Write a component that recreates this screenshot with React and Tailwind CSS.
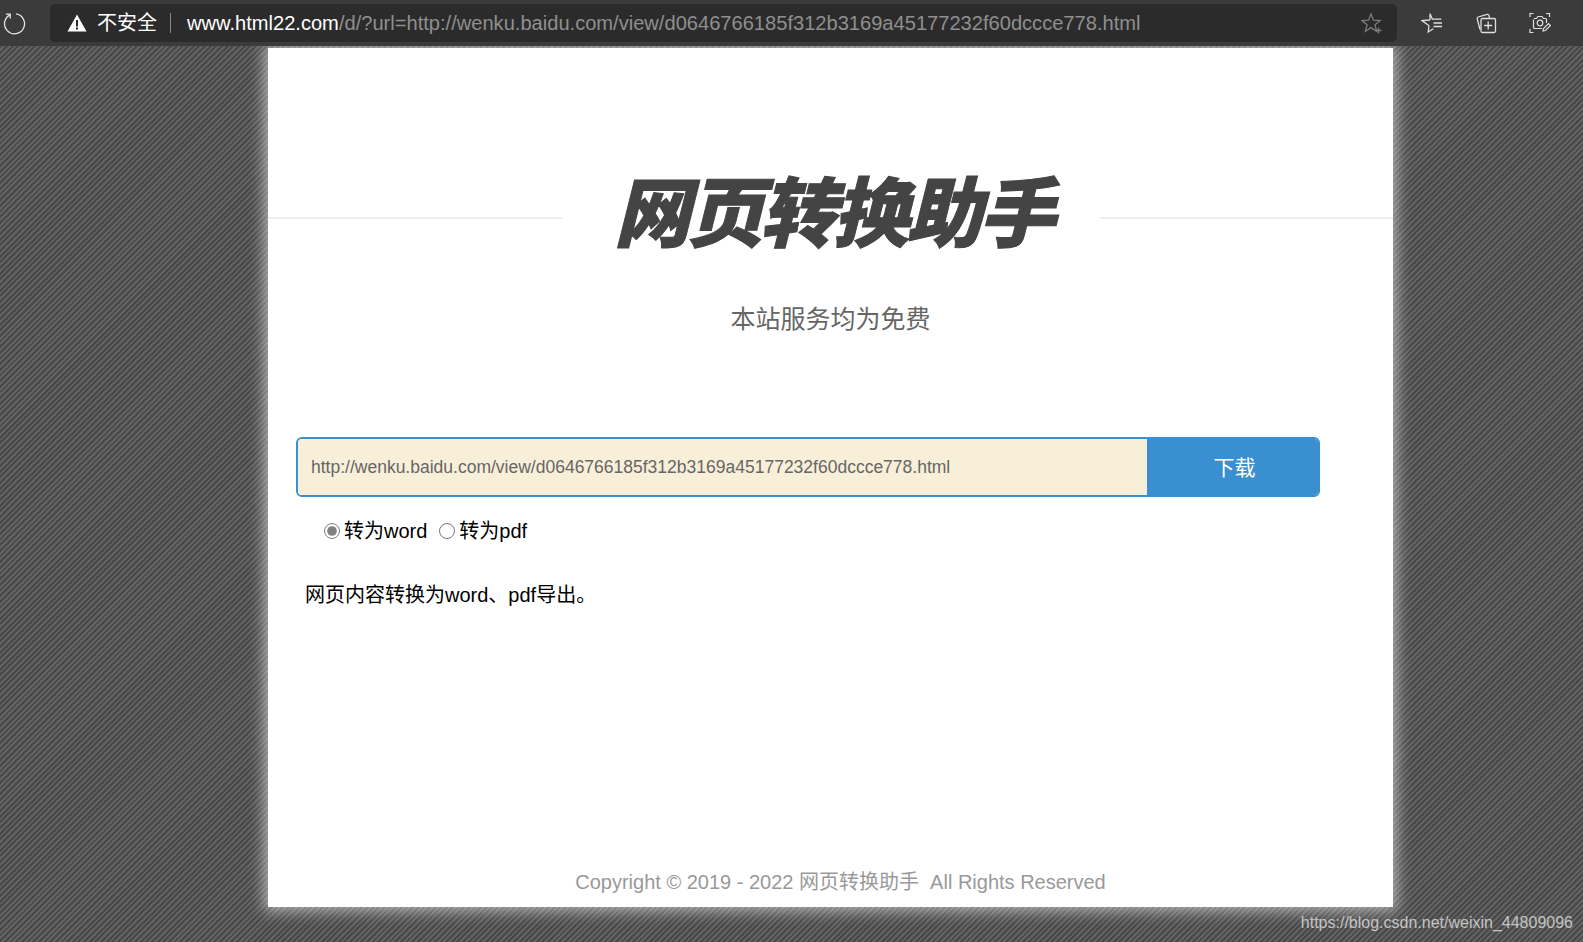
import { useState } from "react";

const cjk = "font-['Liberation_Sans','Noto_Sans_CJK_SC',sans-serif]";

function ReloadIcon() {
  return (
    <svg width="24" height="24" viewBox="0 0 24 24" fill="none" stroke="#e6e6e6" strokeWidth="1.3">
      <path d="M7.6 3.6A10 10 0 1 0 13 2.9" />
      <path d="M7.2 7.6V3.2H3" />
    </svg>
  );
}

function WarningIcon() {
  return (
    <svg width="20" height="18" viewBox="0 0 20 18">
      <path d="M10 0.5L19.5 17.5H0.5Z" fill="#fff" />
      <rect x="9" y="6" width="2" height="6.5" fill="#2b2b2b" />
      <rect x="9" y="13.5" width="2" height="2" fill="#2b2b2b" />
    </svg>
  );
}

function StarAddIcon() {
  return (
    <svg width="22" height="22" viewBox="0 0 22 22" fill="none" stroke="#7d7d7d" strokeWidth="1.3">
      <path d="M10 2l2.500 6.200 6.700.4-5.200 4.200 1.700 6.400L10 15.600l-5.600 3.600 1.700-6.400L.9 8.600l6.700-.4z" />
      <path d="M17.500 15.500v6M14.500 18.500h6" fill="none" />
    </svg>
  );
}

function FavoritesIcon() {
  return (
    <svg width="22" height="22" viewBox="0 0 22 22" fill="none" stroke="#e0e0e0" strokeWidth="1.3">
      <path d="M9 8V1.800l2.400 5.400h9M21 11h-8.500M21 14.500h-8.500M8 13.500l-.8 6.500 5-3.200M9 8l-8 .6 6.800 5" />
    </svg>
  );
}

function CollectionsIcon() {
  return (
    <svg width="22" height="22" viewBox="0 0 22 22" fill="none" stroke="#e0e0e0" strokeWidth="1.3">
      <path d="M5 17.500L2.200 6.800a1.500 1.500 0 0 1 1-1.800l8.800-2.600a1.500 1.500 0 0 1 1.900 1L14.500 6" />
      <rect x="6" y="6.500" width="14.500" height="14" rx="1.500" />
      <path d="M13.200 9.500v8M9.200 13.500h8" />
    </svg>
  );
}

function CaptureIcon() {
  return (
    <svg width="22" height="22" viewBox="0 0 22 22" fill="none" stroke="#e0e0e0" strokeWidth="1.200">
      <path d="M1 5V1.500h3.500M17 1.500h3.500V5M1 17v3.500h3.500" />
      <path d="M5 6.500h2.500L9 4.500h4l1.500 2h2a1 1 0 0 1 1 1v3.500M13 16.500H5.500a1 1 0 0 1-1-1V7.500" />
      <circle cx="11" cy="11" r="2.800" />
      <path d="M14 19l.5-2.500 5-5 2 2-5 5z" />
    </svg>
  );
}

export default function App() {
  const [format, setFormat] = useState("word");
  const [url, setUrl] = useState("http://wenku.baidu.com/view/d0646766185f312b3169a45177232f60dccce778.html");

  return (
    <div className={`relative flex h-[942px] flex-col overflow-hidden bg-[#555] ${cjk}`}>
      {/* Browser toolbar */}
      <div className="relative z-10 flex h-[46px] shrink-0 items-center bg-[#3b3b3b]">
        <div className="flex w-[50px] justify-center pr-[20px]">
          <ReloadIcon />
        </div>
        <div className="flex h-[38px] w-[1347px] items-center rounded-[5px] bg-[#2b2b2b] pl-[17px] pr-[14px]">
          <WarningIcon />
          <span className="ml-[10px] text-[20px] text-white">不安全</span>
          <span className="ml-[13px] mr-[16px] h-[20px] w-px bg-[#8a8a8a]" />
          <span className="flex-1 truncate text-[20.100px]">
            <span className="text-white">www.html22.com</span>
            <span className="text-[#8f8f8f]">/d/?url=http://wenku.baidu.com/view/d0646766185f312b3169a45177232f60dccce778.html</span>
          </span>
          <StarAddIcon />
        </div>
        <div className="flex items-center gap-[32px] pl-[24px]">
          <FavoritesIcon />
          <CollectionsIcon />
          <CaptureIcon />
        </div>
      </div>

      {/* Striped page background */}
      <div className="flex flex-1 bg-[repeating-linear-gradient(135deg,#484848_0px,#484848_2px,#626262_2px,#626262_4px)] pl-[268px] pt-[2px]">
        <div className="mb-[35px] flex w-[1125px] flex-col bg-white shadow-[0_0_14px_4px_rgba(255,255,255,0.55)]">
          {/* Title */}
          <div className="mt-[115px] flex items-center">
            <div className="mt-[19px] h-0.5 flex-1 bg-[#eee]" />
            <h1 className="w-[538px] pl-[5px] text-center text-[76px] leading-[90px] font-black tracking-[-3px] text-[#444] italic [-webkit-text-stroke:1px_#444] font-['Noto_Sans_CJK_SC',sans-serif]">
              网页转换助手
            </h1>
            <div className="mt-[19px] h-0.5 flex-1 bg-[#eee]" />
          </div>
          <p className="mt-[48px] text-center text-[25px] leading-[36px] text-[#666]">本站服务均为免费</p>

          {/* Search form */}
          <form className="mt-[100px] ml-[28px] flex h-[60px] w-[1024px] overflow-hidden rounded-[6px] border-2 border-[#3a8fd0]" onSubmit={(e) => e.preventDefault()}>
            <input
              value={url}
              onChange={(e) => setUrl(e.target.value)}
              className="min-w-0 flex-1 bg-[#f8efd9] pl-[13px] text-[17.500px] text-[#666] outline-none"
            />
            <button type="submit" className="w-[171px] bg-[#3a8fd0] pt-[2px] pl-[4px] text-[21px] text-white">下载</button>
          </form>

          <div className="mt-[19px] ml-[56px] flex items-center text-[20px] leading-[30px] text-black">
            <label className="flex items-center">
              <input type="radio" name="format" checked={format === "word"} onChange={() => setFormat("word")} className="mr-[4px] size-[16px] accent-[#808080]" />
              转为word
            </label>
            <label className="ml-[12px] flex items-center">
              <input type="radio" name="format" checked={format === "pdf"} onChange={() => setFormat("pdf")} className="mr-[4px] size-[16px] accent-[#808080]" />
              转为pdf
            </label>
          </div>

          <p className="mt-[34px] ml-[37px] text-[20px] leading-[30px] text-black">网页内容转换为word、pdf导出。</p>

          <p className="mt-auto mb-[10px] pl-[20px] text-center text-[20px] leading-[30px] text-[#999]">
            Copyright © 2019 - 2022 网页转换助手&nbsp; All Rights Reserved
          </p>
        </div>
      </div>

      {/* Watermark */}
      <span className="absolute right-[10px] bottom-[9px] text-[16px] leading-[20px] text-[#c4c4c4]">
        https://blog.csdn.net/weixin_44809096
      </span>
    </div>
  );
}
